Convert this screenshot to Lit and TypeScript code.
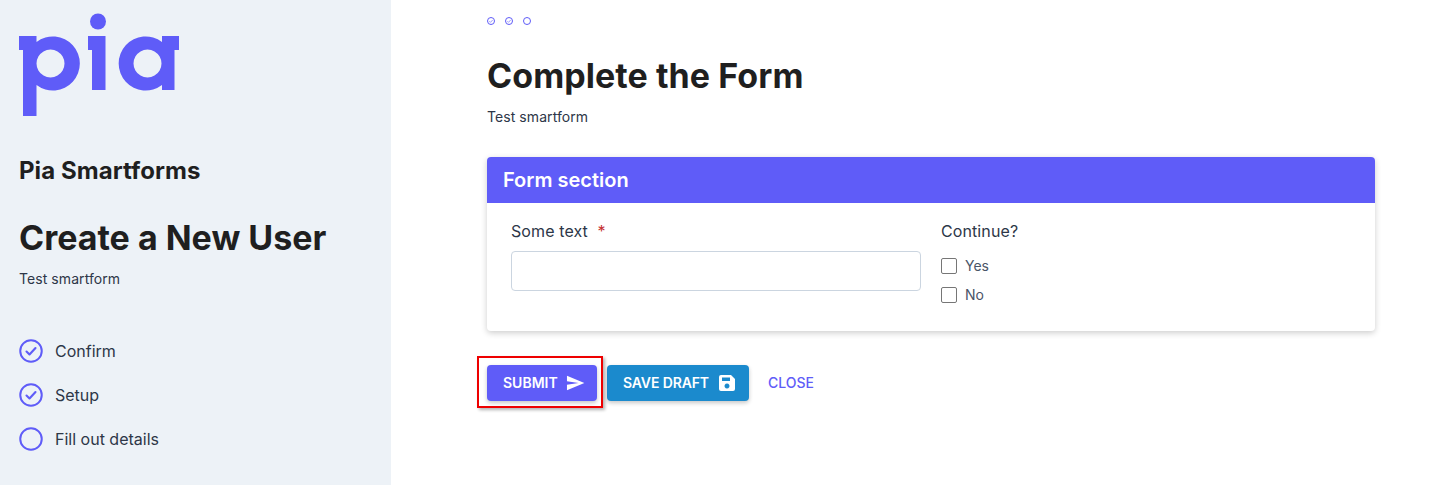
import { LitElement, html, svg, css } from "lit";
import { customElement } from "lit/decorators.js";

const check = svg`<path d="M7.500 12.500l3 3 6-6.500" fill="none" stroke="#5f5cf8" stroke-width="2.100" stroke-linecap="round" stroke-linejoin="round"/>`;
const dotCheck = svg`<path d="M7 12.500l3.500 3.500 6.500-7" fill="none" stroke="#5f5cf8" stroke-opacity=".6" stroke-width="3"/>`;

@customElement("app-root")
export class AppRoot extends LitElement {
  static styles = css`
    :host { display: flex; width: 1432px; height: 485px; overflow: hidden; font-family: Inter, "Liberation Sans", sans-serif; color: #1f1f1f; background: #fff; }
    * { box-sizing: border-box; }
    .side { width: 391px; flex: none; background: #edf2f7; padding: 13px 0 0 19px; display: flex; flex-direction: column; }
    .logo { width: 162px; height: 104px; display: block; }
    .brand { margin: 39px 0 0; font-size: 24px; line-height: 30px; font-weight: 700; letter-spacing: .07px; }
    .title { margin: 30px 0 0; font-size: 34px; line-height: 44px; font-weight: 700; }
    .sub { margin: 9px 0 0; font-size: 14px; line-height: 20px; color: #2d3748; letter-spacing: .07px; }
    .steps { margin: 50px 0 0; display: flex; flex-direction: column; gap: 20px; }
    .step { display: flex; align-items: center; gap: 12px; height: 24px; font-size: 16px; color: #2d3748; }
    .step svg { width: 24px; height: 24px; display: block; }
    .main { flex: 1; padding: 15px 57px 0 96px; display: flex; flex-direction: column; }
    .dots { display: flex; gap: 10px; height: 12px; }
    .dots svg { width: 8px; height: 8px; margin-top: 2px; display: block; overflow: visible; }
    h1 { margin: 27px 0 0; font-size: 34px; line-height: 44px; font-weight: 700; letter-spacing: .07px; }
    .main .sub { margin-top: 9px; }
    .card { margin-top: 30px; border-radius: 4px; background: #fff; box-shadow: 0 2px 6px rgba(0,0,0,.2); height: 174px; }
    .head { height: 46px; background: #5f5cf8; border-radius: 4px 4px 0 0; color: #fff; font-size: 20px; font-weight: 600; line-height: 46px; padding-left: 16px; }
    .body { padding: 16px 24px 0; display: grid; grid-template-columns: 410px 1fr; gap: 20px; }
    .label { font-size: 16px; line-height: 24px; color: #2d3748; letter-spacing: .1px; }
    .req { color: #c53030; margin-left: 5px; }
    .input { margin-top: 8px; height: 40px; border: 1px solid #cbd5e0; border-radius: 4px; background: #fff; }
    .opts { margin-top: 10px; display: flex; flex-direction: column; gap: 5px; }
    .opt { display: flex; align-items: center; gap: 8px; height: 24px; font-size: 14px; color: #4a5568; }
    .box { width: 16px; height: 16px; margin-top: 2px; border: 1px solid #767676; border-radius: 2px; background: #fff; }
    .actions { margin-top: 34px; display: flex; align-items: center; gap: 10px; }
    .btn { height: 36px; border-radius: 4px; display: flex; align-items: center; gap: 8px; padding: 0 12px 2px 16px; color: #fff; font-size: 14px; font-weight: 600; white-space: nowrap; box-shadow: 0 2px 4px rgba(0,0,0,.22); }
    .btn svg { width: 20px; height: 20px; margin-top: 2px; display: block; }
    .submit { background: #5f5cf8; position: relative; width: 110px; }
    .submit::after { content: ""; position: absolute; inset: -9px -6px -7px -10px; border: 2px solid #ee0000; box-shadow: 2px 2px 3px rgba(0,0,0,.3); pointer-events: none; }
    .save { background: #1b8acd; width: 142px; letter-spacing: -.12px; }
    .close { padding: 0 9px 2px; font-size: 14px; font-weight: 500; color: #5f5cf8; }
  `;

  private ring(done: boolean) {
    return html`<svg viewBox="0 0 24 24"><circle cx="12" cy="12" r="10.750" fill="none" stroke="#5f5cf8" stroke-width="2"/>${done ? check : ""}</svg>`;
  }

  render() {
    return html`
      <aside class="side">
        <svg class="logo" viewBox="19 13 162 104" aria-label="pia">
          <path fill="#5f5cf8" fill-rule="evenodd" d="M19 36H36.500V42A27 27 0 1 1 36.500 85V116H23V50H19ZM50.500 49.500a14 14 0 1 0 .01 0Z"/>
          <path fill="#5f5cf8" d="M88 36H105.500V90H92V50H88Z"/>
          <circle fill="#5f5cf8" cx="98" cy="21.500" r="8"/>
          <path fill="#5f5cf8" fill-rule="evenodd" d="M162 42V36H179V50H174.500V90H162V85A27 27 0 1 1 162 42ZM147.500 49.500a14 14 0 1 0 .01 0Z"/>
        </svg>
        <p class="brand">Pia Smartforms</p>
        <div class="title">Create a New User</div>
        <p class="sub">Test smartform</p>
        <div class="steps">
          <div class="step">${this.ring(true)}Confirm</div>
          <div class="step">${this.ring(true)}Setup</div>
          <div class="step">${this.ring(false)}Fill out details</div>
        </div>
      </aside>
      <main class="main">
        <div class="dots">
          ${[true, true, false].map(d => html`<svg viewBox="0 0 24 24"><circle cx="12" cy="12" r="10.500" fill="none" stroke="#5f5cf8" stroke-width="3"/>${d ? dotCheck : ""}</svg>`)}
        </div>
        <h1>Complete the Form</h1>
        <p class="sub">Test smartform</p>
        <section class="card">
          <div class="head">Form section</div>
          <div class="body">
            <div>
              <div class="label">Some text <span class="req">*</span></div>
              <div class="input"></div>
            </div>
            <div>
              <div class="label">Continue?</div>
              <div class="opts">
                <div class="opt"><span class="box"></span>Yes</div>
                <div class="opt"><span class="box"></span>No</div>
              </div>
            </div>
          </div>
        </section>
        <div class="actions">
          <div class="btn submit">SUBMIT
            <svg viewBox="0 0 20 20"><path fill="#fff" d="M1 2.500L19 10 1 17.500V11.700L13 10 1 8.300Z"/></svg>
          </div>
          <div class="btn save">SAVE DRAFT
            <svg viewBox="0 0 20 20"><path fill="#fff" fill-rule="evenodd" d="M4 2H14L18 6V16a2 2 0 0 1-2 2H4a2 2 0 0 1-2-2V4A2 2 0 0 1 4 2ZM5 4.500V8H13V4.500ZM10 10.500a2.500 2.500 0 1 0 .01 0Z"/></svg>
          </div>
          <div class="close">CLOSE</div>
        </div>
      </main>
    `;
  }
}
